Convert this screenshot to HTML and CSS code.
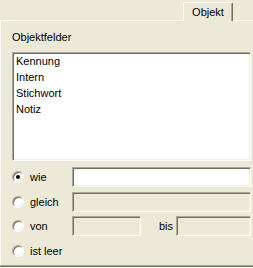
FILE: index.html
```html
<!DOCTYPE html>
<html lang="de">
  <head>
    <meta charset="UTF-8" />
    <title>Objekt</title>
    <link rel="stylesheet" href="styles.css">
  </head>
  <body>
    <div class="tabs">
      <div class="tab-line"></div>
      <div class="tab">Objekt</div>
      <div class="tab-line tab-line-end"></div>
    </div>

    <div class="panel">
      <div class="group-label">Objektfelder</div>
      <ul class="field-list">
        <li>Kennung</li>
        <li>Intern</li>
        <li>Stichwort</li>
        <li>Notiz</li>
      </ul>

      <div class="criteria">
        <div class="row">
          <label class="option"><span class="radio checked"></span>wie</label>
          <input type="text" class="text-box" />
        </div>
        <div class="row">
          <label class="option"><span class="radio"></span>gleich</label>
          <input type="text" class="text-box" disabled />
        </div>
        <div class="row">
          <label class="option"><span class="radio"></span>von</label>
          <input type="text" class="text-box text-box-short" disabled />
          <span class="to-label">bis</span>
          <input type="text" class="text-box" disabled />
        </div>
        <div class="row">
          <label class="option"><span class="radio"></span>ist leer</label>
        </div>
      </div>
    </div>
  </body>
</html>
```

FILE: styles.css
```css
*,
*::after,
*::before {
  margin: 0;
  padding: 0;
  box-sizing: border-box;
}

html {
  font-family: "Liberation Sans", Arial, sans-serif;
  font-size: 11px;
  color: #000;
}

body {
  width: 253px;
  height: 268px;
  background: #ece9d8;
  overflow: hidden;
}

/* tab strip */
.tabs {
  display: flex;
  height: 21px;
}

.tab-line {
  flex: 1;
  border-bottom: 1px solid #fff;
}

.tab-line-end {
  flex: 0 0 20px;
}

.tab {
  width: 50px;
  margin-top: 2px;
  padding-top: 3px;
  line-height: 13px;
  text-align: center;
  border-top: 1px solid #fff;
  border-left: 1px solid #fff;
  border-right: 1px solid #716f64;
  border-radius: 2px 2px 0 0;
  box-shadow: inset -1px 0 0 #aca899;
}

/* tab page */
.panel {
  height: 245px;
  padding: 10px 2px 0 10px;
  border-left: 1px solid #fff;
  border-bottom: 1px solid #aca899;
  box-shadow: 0 1px 0 #716f64, 0 2px 0 #fff;
}

.group-label {
  line-height: 13px;
  padding-left: 1px;
}

.field-list {
  list-style: none;
  margin-top: 8px;
  margin-left: 1px;
  height: 109px;
  padding-left: 2px;
  background: #fff;
  border: 1px solid;
  border-color: #aca899 #fff #fff #aca899;
  box-shadow: inset 1px 1px 0 #716f64, inset -1px -1px 0 #f1efe2;
}

.field-list li {
  line-height: 16px;
  padding-left: 1px;
}

.criteria {
  display: flex;
  flex-direction: column;
  gap: 4.5px;
  margin-top: 6px;
}

.row {
  display: flex;
  align-items: center;
  height: 20px;
}

.option {
  display: flex;
  align-items: center;
  gap: 6px;
  width: 61px;
  padding-left: 1px;
}

.radio {
  position: relative;
  width: 12px;
  height: 12px;
  border-radius: 50%;
  background: #fff;
  border: 1px solid;
  border-color: #aca899 #fff #fff #aca899;
  box-shadow: inset 1px 1px 0 #716f64, inset -1px -1px 0 #f1efe2;
}

.radio.checked::after {
  content: "";
  position: absolute;
  left: 3px;
  top: 3px;
  width: 4px;
  height: 4px;
  border-radius: 50%;
  background: #000;
}

.text-box {
  flex: 1;
  height: 20px;
  min-width: 0;
  font: inherit;
  outline: none;
  background: #fff;
  border: 1px solid;
  border-color: #aca899 #fff #fff #aca899;
  box-shadow: inset 1px 1px 0 #716f64, inset -1px -1px 0 #f1efe2;
}

.text-box:disabled {
  background: #ece9d8;
}

.text-box-short {
  flex: 0 0 69px;
}

.to-label {
  margin-left: 18px;
  margin-right: 3px;
}
```
